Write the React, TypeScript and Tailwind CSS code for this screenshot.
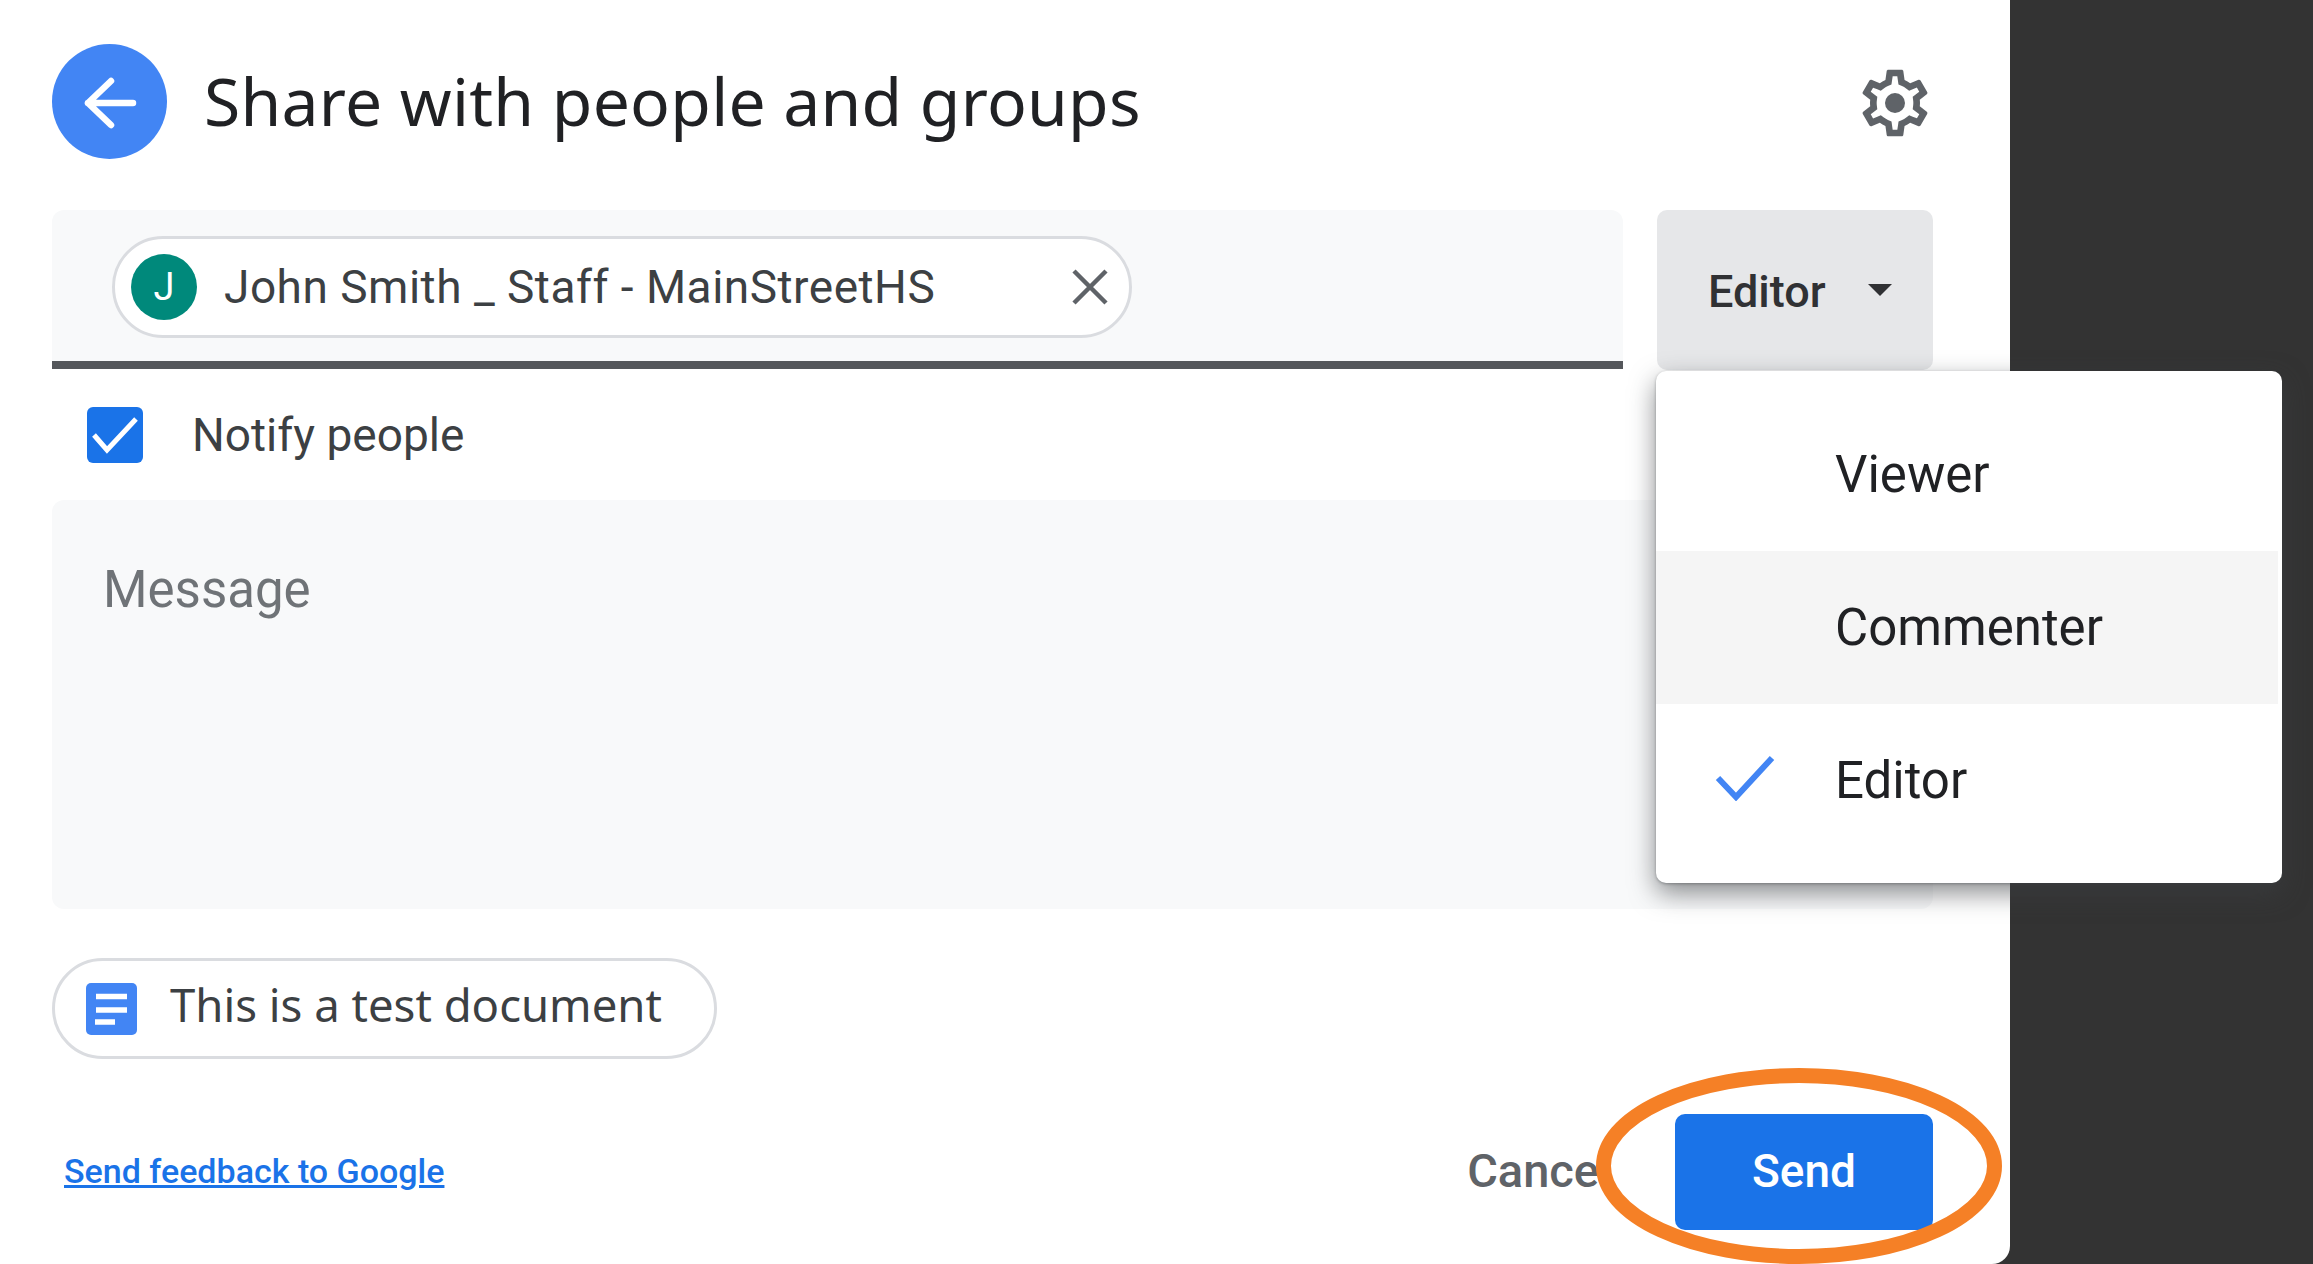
const body = "font-['Roboto',sans-serif]"

const roles = [
  { label: "Viewer", rowClass: "h-[154px]" },
  { label: "Commenter", rowClass: "h-[153px] bg-[#f5f5f5]" },
  { label: "Editor", rowClass: "h-[153px]", checked: true },
]

function BackArrow() {
  return (
    <svg viewBox="0 0 115 115" className="size-[115px]">
      <path d="M81 59H36M59 37 36 59l23 22" fill="none" stroke="#fff" strokeWidth="6.5" strokeLinecap="round" strokeLinejoin="round" />
    </svg>
  )
}

function Gear() {
  return (
    <svg viewBox="0 0 24 24" className="size-[80px]" fill="#5f6368">
      <path d="M19.43 12.98c.04-.32.07-.64.07-.98 0-.34-.03-.66-.07-.98l2.11-1.65c.19-.15.24-.42.12-.64l-2-3.46c-.09-.16-.26-.25-.44-.25-.06 0-.12.01-.17.03l-2.49 1c-.52-.4-1.08-.73-1.69-.98l-.38-2.65C14.46 2.18 14.25 2 14 2h-4c-.25 0-.46.18-.49.42l-.38 2.65c-.61.25-1.17.59-1.69.98l-2.49-1c-.06-.02-.12-.03-.18-.03-.17 0-.34.09-.43.25l-2 3.46c-.13.22-.07.49.12.64l2.11 1.65c-.04.32-.07.65-.07.98 0 .33.03.66.07.98l-2.11 1.65c-.19.15-.24.42-.12.64l2 3.46c.09.16.26.25.44.25.06 0 .12-.01.17-.03l2.49-1c.52.4 1.08.73 1.69.98l.38 2.65c.03.24.24.42.49.42h4c.25 0 .46-.18.49-.42l.38-2.65c.61-.25 1.17-.59 1.69-.98l2.49 1c.06.02.12.03.18.03.17 0 .34-.09.43-.25l2-3.46c.12-.22.07-.49-.12-.64l-2.11-1.65zm-1.98-1.71c.04.31.05.52.05.73 0 .21-.02.43-.05.73l-.14 1.13.89.7 1.08.84-.7 1.21-1.27-.51-1.04-.42-.9.68c-.43.32-.84.56-1.25.73l-1.06.43-.16 1.13-.2 1.35h-1.4l-.19-1.35-.16-1.13-1.06-.43c-.43-.18-.83-.41-1.23-.71l-.91-.7-1.06.43-1.27.51-.7-1.21 1.08-.84.89-.7-.14-1.13c-.03-.31-.05-.54-.05-.74s.02-.43.05-.73l.14-1.13-.89-.7-1.08-.84.7-1.21 1.27.51 1.04.42.9-.68c.43-.32.84-.56 1.25-.73l1.06-.43.16-1.13.2-1.35h1.39l.19 1.35.16 1.13 1.06.43c.43.18.83.41 1.23.71l.91.7 1.06-.43 1.27-.51.7 1.21-1.07.85-.89.7.14 1.13z" />
      <circle cx="12" cy="12" r="3" />
    </svg>
  )
}

function DocIcon() {
  return (
    <svg viewBox="0 0 51 52" className="h-[52px] w-[51px]">
      <rect width="51" height="52" rx="5" fill="#4285f4" />
      <path d="M10 13.5h31M10 27h31M9 39h20" stroke="#fff" strokeWidth="5.5" fill="none" />
    </svg>
  )
}

function RoleMenu() {
  return (
    <div className={`absolute left-[1656px] top-[371px] z-10 w-[626px] overflow-hidden rounded-[10px] bg-white py-[26px] pr-[4px] shadow-[0_10px_26px_rgba(60,64,67,0.6),0_1px_3px_rgba(60,64,67,0.4)] ${body}`}>
      {roles.map((role) => (
        <div key={role.label} className={`relative flex items-center pl-[179px] pt-[2px] text-[51px] text-[#202124] ${role.rowClass}`}>
          {role.checked ? (
            <svg viewBox="0 0 60 46" className="absolute left-[59px] top-[51px] h-[46px] w-[60px]">
              <path d="M3 23l18 19L57 3" fill="none" stroke="#4285f4" strokeWidth="6" />
            </svg>
          ) : null}
          {role.label}
        </div>
      ))}
    </div>
  )
}

export default function App() {
  return (
    <div className="relative flex h-[1264px] w-[2313px] overflow-hidden bg-[#333333]">
      <div className={`flex h-[1264px] w-[2010px] flex-col rounded-br-[18px] bg-white pl-[52px] pr-[77px] pt-[44px] ${body}`}>
        <div className="flex h-[115px] items-center">
          <div className="size-[115px] rounded-full bg-[#4285f4]">
            <BackArrow />
          </div>
          <h1 className="ml-[37px] mt-[-3px] font-['Noto_Sans',sans-serif] text-[66px] font-normal tracking-[0.25px] text-[#202124]">Share with people and groups</h1>
          <div className="ml-auto mr-[-2px] mt-[3px]">
            <Gear />
          </div>
        </div>

        <div className="mt-[51px] flex h-[160px] gap-[34px]">
          <div className="flex h-[159px] w-[1571px] items-start rounded-t-[12px] border-b-[8px] border-[#54575b] bg-[#f8f9fa] pl-[60px] pt-[26px]">
            <div className="flex h-[102px] w-[1020px] items-center rounded-full border-[3px] border-[#dadce0] bg-white pl-[16px]">
              <div className="flex size-[66px] items-center justify-center rounded-full bg-[#00897b] text-[38px] text-white">J</div>
              <span className="ml-[27px] text-[46px] tracking-[0.5px] text-[#3c4043]">John Smith _ Staff - MainStreetHS</span>
              <svg viewBox="0 0 36 36" className="ml-auto mr-[21px] size-[36px]">
                <path d="M2 2l32 32M34 2 2 34" stroke="#5f6368" strokeWidth="4.5" fill="none" />
              </svg>
            </div>
          </div>
          <div className="flex h-[160px] w-[276px] items-center rounded-[10px] bg-[#e6e7e9] pl-[51px] pt-[4px]">
            <span className="text-[45px] font-medium text-[#303134]">Editor</span>
            <span className="ml-[42px] mt-[-4px] h-0 w-0 border-x-[12px] border-t-[12px] border-x-transparent border-t-[#303134]" />
          </div>
        </div>

        <div className="flex h-[130px] items-center pl-[35px]">
          <div className="flex size-[56px] items-center justify-center rounded-[6px] bg-[#1a73e8]">
            <svg viewBox="0 0 48 40" className="h-[40px] w-[48px]">
              <path d="M3 20l13 15L45 4" fill="none" stroke="#fff" strokeWidth="5" />
            </svg>
          </div>
          <span className="ml-[49px] text-[46px] text-[#3c4043]">Notify people</span>
        </div>

        <div className="h-[409px] rounded-[12px] bg-[#f8f9fa] pl-[51px] pt-[57px]">
          <span className="text-[51px] leading-[66px] text-[#6f7377]">Message</span>
        </div>

        <div className="mt-[49px] flex h-[101px] w-[665px] items-center rounded-full border-[3px] border-[#dadce0] pl-[31px]">
          <DocIcon />
          <span className="ml-[33px] mt-[-8px] font-['Noto_Sans',sans-serif] text-[45.5px] text-[#3c4043]">This is a test document</span>
        </div>

        <div className="mt-[55px] flex h-[116px] items-center pl-[12px]">
          <a className="mt-[-2px] text-[34px] font-medium text-[#1a73e8] underline">Send feedback to Google</a>
          <span className="ml-auto mt-[-2px] text-[47px] font-medium text-[#5f6368]">Cancel</span>
          <button type="button" className="ml-[64px] h-[116px] w-[258px] rounded-[10px] bg-[#1a73e8] pb-[2px] text-[46px] font-medium text-white">Send</button>
        </div>
      </div>

      <RoleMenu />

      <svg viewBox="0 0 406 196" className="absolute left-[1596px] top-[1068px] h-[196px] w-[406px]">
        <ellipse cx="203" cy="98" rx="195.5" ry="90.5" fill="none" stroke="#f58026" strokeWidth="15" />
      </svg>
    </div>
  )
}
